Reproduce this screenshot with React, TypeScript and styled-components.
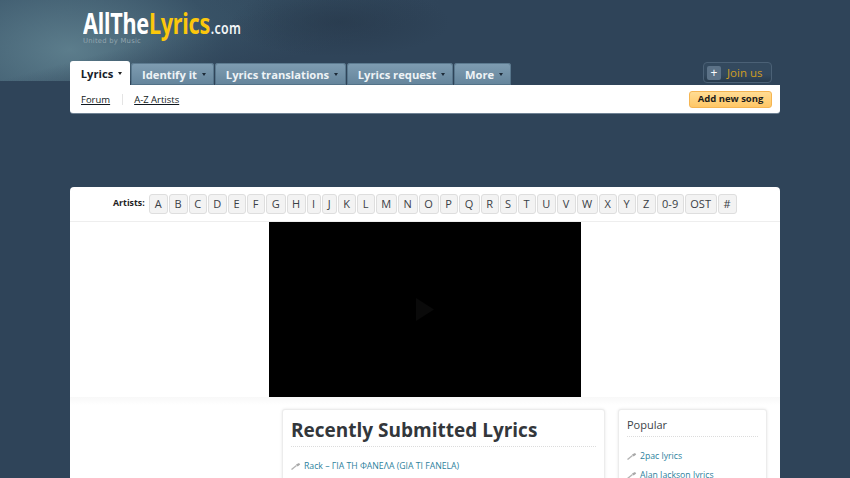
import React from "react";
import styled, { createGlobalStyle } from "styled-components";

const Global = createGlobalStyle`
  html, body { margin: 0; padding: 0; height: 478px; overflow: hidden; background: #2f4459; }
  * { box-sizing: border-box; }
  #root { font-family: "Open Sans", "Noto Sans", sans-serif; }
`;

const Page = styled.div`
  height: 478px;
  overflow: hidden;
  background-color: #2f4459;
  background-image:
    radial-gradient(ellipse 110px 35px at 340px 22px, rgba(38, 55, 73, 0.6), rgba(38, 55, 73, 0) 100%),
    linear-gradient(165deg, rgba(47, 68, 89, 0) 26%, rgba(47, 68, 89, 1) 44%),
    radial-gradient(ellipse 220px 120px at 70px 50px, rgba(98, 132, 146, 0.85), rgba(58, 85, 105, 0.45) 70%, rgba(47, 68, 89, 0) 100%),
    linear-gradient(90deg, #3c586c 0, #32495d 320px, #2f4459 440px);
  background-size: 100% 81px;
  background-repeat: no-repeat;
`;

const Wrap = styled.div`
  width: 710px;
  margin: 0 0 0 70px;
`;

const LogoArea = styled.div`
  height: 61px;
  padding: 8px 0 0 13px;
`;

const Logo = styled.div`
  display: flex;
  align-items: baseline;
  height: 30px;
  width: 220px;
  transform: scaleX(0.772);
  transform-origin: left top;
  font-family: "Noto Sans", sans-serif;
  font-weight: 700;
  font-size: 28px;
  line-height: 30px;
  letter-spacing: -0.3px;
  color: #fff;
  white-space: nowrap;
`;

const LogoYellow = styled.span`
  color: #fcc70c;
`;

const LogoCom = styled.span`
  font-size: 16px;
  font-weight: 600;
  letter-spacing: 0.4px;
  margin-left: 1px;
  color: #f2f5f7;
`;

const Tagline = styled.div`
  font-family: "DejaVu Sans", sans-serif;
  font-size: 6.8px;
  line-height: 8px;
  margin-top: -1px;
  letter-spacing: 0.25px;
  color: #93a5af;
`;

const NavRow = styled.div`
  height: 24px;
  display: flex;
  align-items: flex-end;
`;

const Tab = styled.div<{ $active?: boolean; $w: number }>`
  width: ${(p) => p.$w}px;
  height: ${(p) => (p.$active ? 24 : 22)}px;
  margin-right: 1px;
  padding-left: 3px;
  display: flex;
  align-items: center;
  justify-content: center;
  gap: 5px;
  border-radius: 3px 3px 0 0;
  font-size: 11.2px;
  font-weight: 700;
  white-space: nowrap;
  color: ${(p) => (p.$active ? "#17212b" : "#eef3f6")};
  background: ${(p) => (p.$active ? "#fff" : "linear-gradient(#7f9db2, #64849b)")};
  box-shadow: ${(p) => (p.$active ? "none" : "inset 0 0 0 1px rgba(70, 100, 122, 0.6)")};
`;

const Caret = styled.i<{ $dark?: boolean }>`
  width: 0;
  height: 0;
  border-left: 2px solid transparent;
  border-right: 2px solid transparent;
  border-top: 3px solid ${(p) => (p.$dark ? "#222" : "#1c2b38")};
`;

const JoinBox = styled.div`
  margin: 0 8px 2px auto;
  width: 69px;
  height: 21px;
  display: flex;
  align-items: center;
  gap: 6px;
  padding-left: 3px;
  border: 1px solid #4b6176;
  border-radius: 4px;
  background: linear-gradient(#33495e 60%, #283b4d);
  font-size: 11.5px;
  color: #cf9d20;
`;

const Plus = styled.span`
  width: 14px;
  height: 14px;
  border-radius: 2px;
  background: #5c7287;
  color: #fff;
  font-size: 12px;
  line-height: 14px;
  text-align: center;
`;

const SubBar = styled.div`
  height: 28px;
  display: flex;
  align-items: center;
  padding: 0 8px 0 11px;
  background: #fff;
  border-radius: 0 0 3px 3px;
  box-shadow: 0 1px 0 #6f8294;
`;

const SubLink = styled.a`
  font-size: 9.5px;
  color: #101820;
  text-decoration: underline;
`;

const SubDivider = styled.span`
  width: 1px;
  height: 11px;
  margin: 0 11px 0 12px;
  background: #e4e4e4;
`;

const AddButton = styled.div`
  margin-left: auto;
  width: 83px;
  height: 17px;
  border: 1px solid #f5b552;
  border-radius: 3px;
  background: linear-gradient(#ffdc94, #ffc766);
  font-size: 9.5px;
  font-weight: 700;
  line-height: 14px;
  text-align: center;
  color: #1c1c1c;
`;

const Content = styled.div`
  margin-top: 74px;
  height: 300px;
  background: #fff;
  border-radius: 4px 4px 0 0;
  overflow: hidden;
`;

const AlphaBar = styled.div`
  height: 35px;
  display: flex;
  align-items: center;
  padding: 0 0 0 43px;
  border-bottom: 1px solid #eeeeee;
`;

const AlphaLabel = styled.span`
  font-size: 8.8px;
  font-weight: 700;
  color: #222;
  margin: 0 4px 2px 0;
`;

const AlphaKeys = styled.div`
  display: flex;
  gap: 1px;
`;

const Key = styled.span<{ $w: number }>`
  width: ${(p) => p.$w}px;
  height: 20px;
  border: 1px solid #dedede;
  border-radius: 3px;
  background: #f3f3f3;
  font-size: 11px;
  line-height: 18px;
  text-align: center;
  color: #3a4045;
`;

const VideoRow = styled.div`
  height: 175px;
  display: flex;
  justify-content: center;
  padding-right: 1px;
`;

const Video = styled.div`
  width: 312px;
  height: 175px;
  background: #000;
  display: flex;
  align-items: center;
  justify-content: center;
`;

const Lower = styled.div`
  height: 90px;
  display: flex;
  align-items: flex-start;
  padding: 12px 0 0 212px;
  gap: 13px;
  background: linear-gradient(#f8f8f8, #fff 8px);
`;

const Card = styled.div<{ $w: number }>`
  width: ${(p) => p.$w}px;
  height: 90px;
  padding: 0 8px;
  background: #fff;
  border: 1px solid #ececec;
  border-radius: 3px;
  box-shadow: 0 0 3px rgba(0, 0, 0, 0.1);
`;

const BigTitle = styled.h1`
  margin: 0;
  height: 37px;
  padding-top: 6px;
  font-size: 19px;
  line-height: 28px;
  font-weight: 700;
  color: #33373b;
  border-bottom: 1px dotted #dcdcdc;
  white-space: nowrap;
`;

const SmallTitle = styled.h2`
  margin: 0;
  height: 27px;
  padding-top: 6px;
  font-size: 11px;
  line-height: 18px;
  font-weight: 400;
  color: #3c4348;
  border-bottom: 1px dotted #dcdcdc;
`;

const ItemList = styled.div<{ $top: number; $gap: number }>`
  display: flex;
  flex-direction: column;
  gap: ${(p) => p.$gap}px;
  padding-top: ${(p) => p.$top}px;
`;

const Item = styled.a`
  display: flex;
  align-items: center;
  gap: 3px;
  height: 14px;
  font-size: 8.7px;
  line-height: 14px;
  color: #2d7f9d;
  white-space: nowrap;
`;

const Mic = () => (
  <svg width="10" height="8" viewBox="0 0 10 8">
    <path d="M0.5 7.5 L5.5 3.5" stroke="#b4b4b4" strokeWidth="1.4" fill="none" />
    <path d="M5 2.6 L8 1 L9.2 2.4 L6.6 4.6 Z" fill="#a8a8a8" />
  </svg>
);

const letters: [string, number][] = [
  ["A", 19], ["B", 19], ["C", 18], ["D", 19], ["E", 18], ["F", 18], ["G", 20], ["H", 19],
  ["I", 14], ["J", 15], ["K", 18], ["L", 18], ["M", 21], ["N", 20], ["O", 20], ["P", 18],
  ["Q", 21], ["R", 18], ["S", 17], ["T", 18], ["U", 19], ["V", 19], ["W", 21], ["X", 18],
  ["Y", 18], ["Z", 19], ["0-9", 27], ["OST", 32], ["#", 19],
];

export default function App() {
  return (
    <Page>
      <Global />
      <Wrap>
        <LogoArea>
          <Logo>
            AllThe<LogoYellow>Lyrics</LogoYellow>
            <LogoCom>.com</LogoCom>
          </Logo>
          <Tagline>United by Music</Tagline>
        </LogoArea>
        <NavRow>
          <Tab $active $w={60}>Lyrics <Caret $dark /></Tab>
          <Tab $w={83}>Identify it <Caret /></Tab>
          <Tab $w={131}>Lyrics translations <Caret /></Tab>
          <Tab $w={106}>Lyrics request <Caret /></Tab>
          <Tab $w={57}>More <Caret /></Tab>
          <JoinBox>
            <Plus>+</Plus>
            Join us
          </JoinBox>
        </NavRow>
        <SubBar>
          <SubLink>Forum</SubLink>
          <SubDivider />
          <SubLink>A-Z Artists</SubLink>
          <AddButton>Add new song</AddButton>
        </SubBar>
        <Content>
          <AlphaBar>
            <AlphaLabel>Artists:</AlphaLabel>
            <AlphaKeys>
              {letters.map(([l, w]) => (
                <Key key={l} $w={w}>{l}</Key>
              ))}
            </AlphaKeys>
          </AlphaBar>
          <VideoRow>
            <Video>
              <svg width="18" height="23" viewBox="0 0 18 23">
                <path d="M0 0 L18 11.5 L0 23 Z" fill="#0a0a0a" />
              </svg>
            </Video>
          </VideoRow>
          <Lower>
            <Card $w={323}>
              <BigTitle>Recently Submitted Lyrics</BigTitle>
              <ItemList $top={12} $gap={8}>
                <Item><Mic />Rack – ΓΙΑ ΤΗ ΦΑΝΕΛΑ (GIA TI FANELA)</Item>
              </ItemList>
            </Card>
            <Card $w={149}>
              <SmallTitle>Popular</SmallTitle>
              <ItemList $top={12} $gap={5}>
                <Item><Mic />2pac lyrics</Item>
                <Item><Mic />Alan Jackson lyrics</Item>
              </ItemList>
            </Card>
          </Lower>
        </Content>
      </Wrap>
    </Page>
  );
}
